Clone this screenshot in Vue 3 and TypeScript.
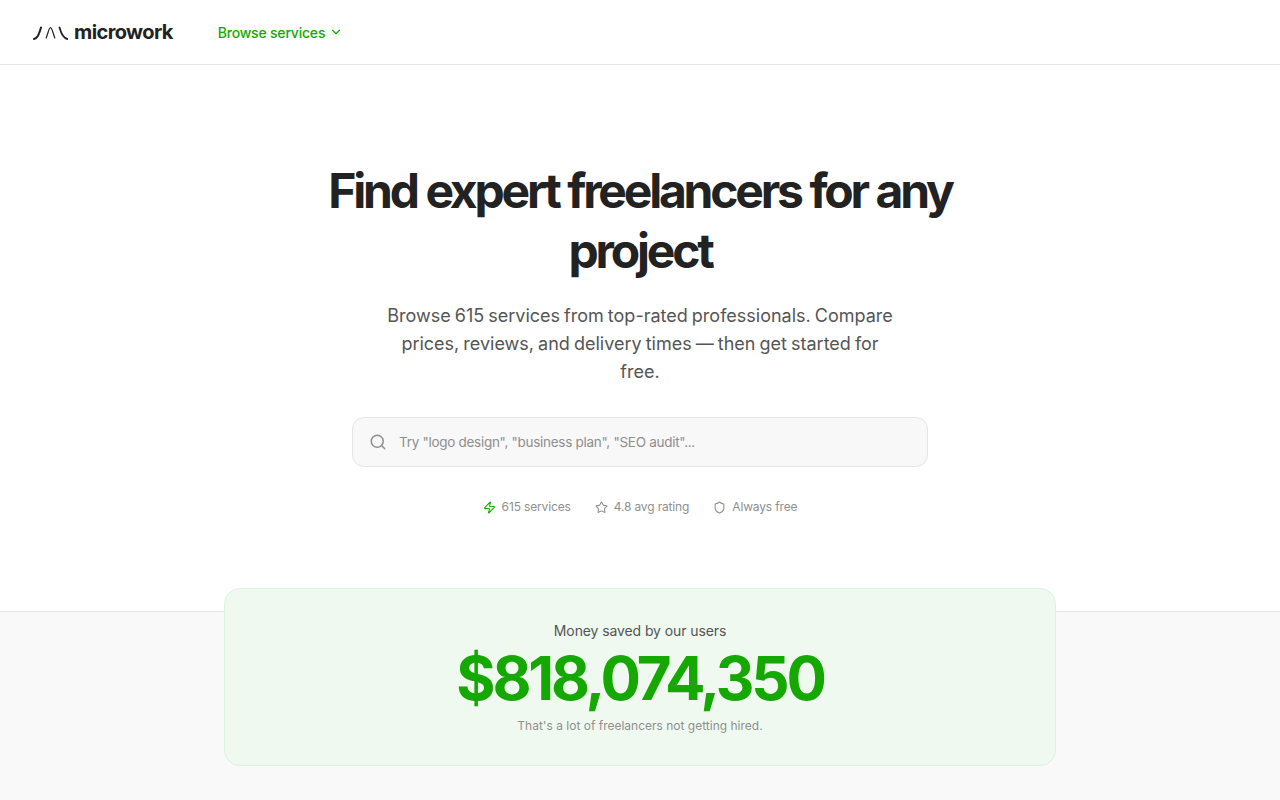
<script setup lang="ts">
const query = '';
</script>

<template>
  <div class="page">
    <header class="topbar">
      <a class="brand">
        <svg class="logo" width="36" height="16" viewBox="0 0 36 16" fill="none" stroke="#222" stroke-linecap="round">
          <path d="M2 15C5.5 14.2 6.8 11 9 3.5" stroke-width="2" />
          <path d="M14.2 14C15.8 10 17 3.6 18.5 3.6C20 3.6 21.2 10 22.8 14" stroke-width="1.2" />
          <path d="M27.5 3.5C29.5 11 31.5 14.2 35.5 15" stroke-width="1.8" />
        </svg>
        <span class="brand-name">microwork</span>
      </a>
      <a class="browse">
        Browse services
        <svg width="14" height="14" viewBox="0 0 24 24" fill="none" stroke="currentColor" stroke-width="2" stroke-linecap="round" stroke-linejoin="round"><path d="m6 9 6 6 6-6" /></svg>
      </a>
    </header>

    <section class="hero">
      <h1>Find expert freelancers for any project</h1>
      <p class="lede">Browse 615 services from top-rated professionals. Compare prices, reviews, and delivery times — then get started for free.</p>
      <label class="search">
        <svg width="18" height="18" viewBox="0 0 24 24" fill="none" stroke="#8f8f8f" stroke-width="2" stroke-linecap="round" stroke-linejoin="round"><circle cx="11" cy="11" r="8" /><path d="m21 21-4.3-4.3" /></svg>
        <input :value="query" placeholder='Try "logo design", "business plan", "SEO audit"...' />
      </label>
      <ul class="stats">
        <li>
          <svg class="bolt" width="13" height="13" viewBox="0 0 24 24" fill="none" stroke="currentColor" stroke-width="2" stroke-linecap="round" stroke-linejoin="round"><path d="M4 14a1 1 0 0 1-.78-1.63l9.9-10.2a.5.5 0 0 1 .86.46l-1.92 6.02A1 1 0 0 0 13 10h7a1 1 0 0 1 .78 1.63l-9.9 10.2a.5.5 0 0 1-.86-.46l1.92-6.02A1 1 0 0 0 11 14z" /></svg>
          615 services
        </li>
        <li>
          <svg width="13" height="13" viewBox="0 0 24 24" fill="none" stroke="currentColor" stroke-width="2" stroke-linecap="round" stroke-linejoin="round"><path d="M11.5 2.3a.53.53 0 0 1 .95 0l2.31 4.68a2.12 2.12 0 0 0 1.6 1.16l5.17.76a.53.53 0 0 1 .29.9l-3.74 3.64a2.12 2.12 0 0 0-.61 1.88l.88 5.14a.53.53 0 0 1-.77.56l-4.62-2.43a2.12 2.12 0 0 0-1.97 0L6.4 21.01a.53.53 0 0 1-.77-.56l.88-5.14a2.12 2.12 0 0 0-.61-1.88L2.16 9.8a.53.53 0 0 1 .29-.9l5.17-.76a2.12 2.12 0 0 0 1.6-1.16z" /></svg>
          4.8 avg rating
        </li>
        <li>
          <svg width="13" height="13" viewBox="0 0 24 24" fill="none" stroke="currentColor" stroke-width="2" stroke-linecap="round" stroke-linejoin="round"><path d="M20 13c0 5-3.5 7.5-7.66 8.95a1 1 0 0 1-.67-.01C7.5 20.5 4 18 4 13V6a1 1 0 0 1 1-1c2 0 4.5-1.2 6.24-2.72a1.17 1.17 0 0 1 1.52 0C14.51 3.81 17 5 19 5a1 1 0 0 1 1 1z" /></svg>
          Always free
        </li>
      </ul>
    </section>

    <section class="savings-band">
      <div class="savings">
        <p class="savings-label">Money saved by our users</p>
        <p class="savings-value">$818,074,350</p>
        <p class="savings-note">That's a lot of freelancers not getting hired.</p>
      </div>
    </section>
  </div>
</template>

<style>
html, body { margin: 0; background: #fff; overflow: hidden; }
</style>

<style scoped>
.page {
  height: 800px;
  display: flex;
  flex-direction: column;
  font-family: Inter, "Liberation Sans", sans-serif;
  color: #222;
}
.topbar {
  height: 64px;
  flex: none;
  display: flex;
  align-items: center;
  gap: 45px;
  padding: 0 32px;
  border-bottom: 1px solid #e5e5e5;
}
.brand { display: flex; align-items: center; gap: 6px; }
.logo { display: block; }
.brand-name { font-size: 20px; font-weight: 700; letter-spacing: -0.6px; color: #222; line-height: 28px; }
.browse {
  display: flex;
  align-items: center;
  gap: 4px;
  font-size: 14px;
  font-weight: 500;
  letter-spacing: -0.2px;
  color: #14a800;
}
.hero {
  flex: none;
  height: 546px;
  box-sizing: border-box;
  padding-top: 96px;
  display: flex;
  flex-direction: column;
  align-items: center;
  text-align: center;
}
h1 {
  margin: 0;
  width: 672px;
  font-size: 48px;
  line-height: 60px;
  font-weight: 700;
  letter-spacing: -3.2px;
  word-spacing: 0.5px;
  color: #222;
}
.lede {
  margin: 21px 0 0;
  width: 520px;
  font-size: 18px;
  line-height: 28px;
  word-spacing: -1px;
  color: #555;
}
.search {
  margin-top: 31px;
  box-sizing: border-box;
  width: 576px;
  height: 50px;
  display: flex;
  align-items: center;
  gap: 12px;
  padding: 0 16px;
  background: #f8f8f8;
  border: 1px solid #e5e5e5;
  border-radius: 12px;
}
.search input {
  flex: 1;
  border: 0;
  outline: 0;
  padding: 0;
  background: transparent;
  font: inherit;
  font-size: 13.5px;
  letter-spacing: -0.29px;
  color: #222;
}
.search input::placeholder { color: #8f8f8f; opacity: 1; }
.stats {
  list-style: none;
  margin: 32px 0 0;
  padding: 0;
  display: flex;
  align-items: center;
  gap: 24px;
  font-size: 12px;
  line-height: 16px;
  letter-spacing: -0.15px;
  color: #8f8f8f;
}
.stats li { display: flex; align-items: center; gap: 6px; }
.bolt { color: #14a800; }
.savings-band {
  flex: 1;
  background: #f9f9f9;
  border-top: 1px solid #e5e5e5;
  display: flex;
  justify-content: center;
  align-items: flex-start;
}
.savings {
  margin-top: -24px;
  box-sizing: border-box;
  width: 832px;
  height: 178px;
  padding-top: 32px;
  text-align: center;
  background: #f0f9f0;
  border: 1px solid #ddf2dc;
  border-radius: 16px;
}
.savings-label { margin: 0; font-size: 14px; line-height: 20px; letter-spacing: -0.1px; color: #555; }
.savings-value {
  margin: 7px 0 0;
  font-size: 60px;
  line-height: 60px;
  font-weight: 700;
  letter-spacing: -3.2px;
  color: #14a800;
}
.savings-note { margin: 10px 0 0; font-size: 12px; line-height: 16px; color: #8f8f8f; }
</style>
